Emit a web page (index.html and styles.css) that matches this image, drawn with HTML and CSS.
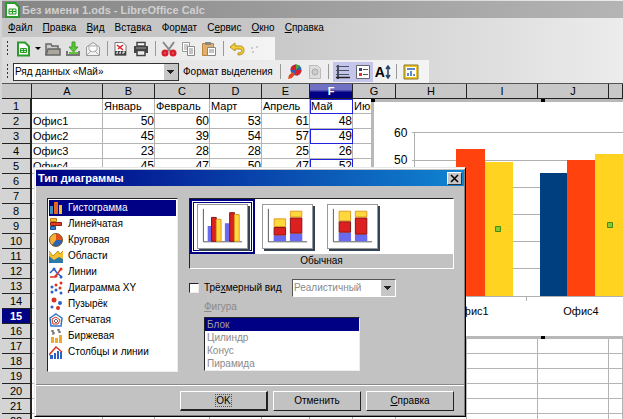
FILE: index.html
```
<!DOCTYPE html>
<html lang="ru">
<head>
    <meta charset="UTF-8">
    <meta name="viewport" content="width=device-width, initial-scale=1.0">
    <title>Без имени 1.ods - LibreOffice Calc</title>
    <link rel="stylesheet" href="styles.css">
</head>
<body>
    <header class="title-bar">
        <svg class="icon" viewBox="0 0 16 16"><path d="M2 1h9l4 4v10H2z" fill="#fff" stroke="#2a9a2a" stroke-width="2"/><path d="M5 7h7v5H5zM8.500 7v5M5 9.500h7" fill="#dff5df" stroke="#2a9a2a"/></svg>
        <h1>Без имени 1.ods - LibreOffice Calc</h1>
    </header>

    <nav class="menu">
        <a href="#"><u>Ф</u>айл</a>
        <a href="#"><u>П</u>равка</a>
        <a href="#"><u>В</u>ид</a>
        <a href="#">Вст<u>а</u>вка</a>
        <a href="#">Фор<u>м</u>ат</a>
        <a href="#">С<u>е</u>рвис</a>
        <a href="#"><u>О</u>кно</a>
        <a href="#"><u>С</u>правка</a>
    </nav>

    <div class="toolbar">
        <span class="handle"></span>
        <button class="tool" aria-label="Создать"><svg class="icon" viewBox="0 0 16 16"><path d="M3 1.500h7l4 4v9H3z" fill="#fff" stroke="#2a9a2a" stroke-width="2"/><path d="M5.500 7.500h6v4h-6zM8.500 7.500v4M5.500 9.500h6" fill="#c8efc8" stroke="#2a9a2a"/></svg></button>
        <button class="arrow" aria-label="Список"></button>
        <button class="tool" aria-label="Открыть"><svg class="icon" viewBox="0 0 16 16"><path d="M1 14V3h5l1 2h6v3" fill="#ccc" stroke="#666" stroke-width="1.500"/><path d="M1 14l2-6h12v6z" fill="#aaa89c" stroke="#666" stroke-width="1.500"/></svg></button>
        <button class="tool" aria-label="Сохранить"><svg class="icon" viewBox="0 0 16 16"><path d="M7 1h3v5h3l-4.500 5L4 6h3z" fill="#5ec43c" stroke="#38a01c"/><path d="M2 10v4h12v-4" fill="none" stroke="#777" stroke-width="2"/><path d="M4 12h9" stroke="#5ec43c" stroke-width="2"/></svg></button>
        <button class="tool" aria-label="Отправить"><svg class="icon" viewBox="0 0 16 16"><path d="M1.500 6L8 1.500 14.500 6v8.500h-13z" fill="#f2f2f2" stroke="#999"/><path d="M4 5h8v4l-4 2-4-2zM1.500 14.500L6 10M14.500 14.500L10 10" fill="#fff" stroke="#aaa"/></svg></button>
        <span class="sep"></span>
        <button class="tool" aria-label="Экспорт в PDF"><svg class="icon" viewBox="0 0 16 16"><path d="M2 1.500h8l3 3v10H2z" fill="#fff" stroke="#777"/><path d="M4 4l6 5M5 8l5-4" stroke="#d22" stroke-width="1.500"/><path d="M2 10h11v4H2z" fill="#444"/><path d="M4 13v-2h1M7 13v-2h1M10 13v-2h2" stroke="#fff" fill="none"/></svg></button>
        <button class="tool" aria-label="Печать"><svg class="icon" viewBox="0 0 16 16"><path d="M1 5h14v7H1z" fill="#444"/><path d="M4 1.500h8V5H4z" fill="#fff" stroke="#444" stroke-width="1.500"/><path d="M4 9.500h8v5H4z" fill="#eee" stroke="#444" stroke-width="1.500"/><path d="M3 7h10" stroke="#999"/></svg></button>
        <span class="sep"></span>
        <button class="tool" aria-label="Вырезать"><svg class="icon" viewBox="0 0 16 16"><path d="M2 1l8 10M13 1L6 11" stroke="#888" stroke-width="2"/><circle cx="4" cy="12" r="2" fill="#fff" stroke="#d8202c" stroke-width="3"/><circle cx="12" cy="12" r="2" fill="#fff" stroke="#d8202c" stroke-width="3"/></svg></button>
        <button class="tool" aria-label="Копировать"><svg class="icon" viewBox="0 0 16 16"><path d="M1.500 1.500h7v9h-7zM3 4h4M3 6h4M3 8h4" fill="#fff" stroke="#999"/><path d="M6.500 5.500h7v9h-7zM8 8h4M8 10h4M8 12h4" fill="#fff" stroke="#888"/></svg></button>
        <button class="tool" aria-label="Вставить"><svg class="icon" viewBox="0 0 16 16"><path d="M1.500 2.500h11v12h-11z" fill="#e2b06a" stroke="#b8863c"/><path d="M4 1h6v3H4z" fill="#888"/><path d="M6.500 6.500h8v8h-8zM8 9h5M8 11h5" fill="#fff" stroke="#888"/></svg></button>
        <span class="sep"></span>
        <button class="tool" aria-label="Отменить"><svg class="icon" viewBox="0 0 16 16"><path d="M6 2L1 6l5 4V8h5q2 0 2 2t-4 2v2q6 0 6-4.500T11 5H6z" fill="#f4cf3a" stroke="#b8901c"/></svg></button>
        <button class="tool" aria-label="Вернуть"><svg class="icon" viewBox="0 0 16 16"><path d="M2 7h2M7 6h2M3 11h2" stroke="#ccc" stroke-width="2"/></svg></button>
    </div>

    <div class="toolbar">
        <span class="handle"></span>
        <select class="element-select" aria-label="Элемент диаграммы">
            <option>Ряд данных «Май»</option>
        </select>
        <button class="text-tool">Формат выделения</button>
        <span class="sep"></span>
        <button class="tool" aria-label="Тип диаграммы"><svg class="icon" viewBox="0 0 16 16"><circle cx="9" cy="6" r="5.500" fill="#2b62b8"/><path d="M9 6V0.500A5.500 5.500 0 0 0 3.500 6z" fill="#d8202c"/><path d="M9 6h5.500A5.500 5.500 0 0 1 9 11.500z" fill="#d8202c"/><path d="M9 6V0.500A5.500 5.500 0 0 1 13 2z" fill="#4aa83c"/><path d="M1 15l1-4 4-3 2 2-3 4z" fill="#e04a20"/></svg></button>
        <button class="tool" aria-label="Таблица данных" disabled><svg class="icon" viewBox="0 0 16 16"><path d="M2.500 1.500h8l3 3v10h-11z" fill="#ddd" stroke="#bbb"/><circle cx="8" cy="8" r="3" fill="#ccc" stroke="#aaa"/></svg></button>
        <span class="sep"></span>
        <button class="tool pressed" aria-label="Сетка"><svg class="icon" viewBox="0 0 16 16"><path d="M3 1v14M1 13.500h14" stroke="#222" stroke-width="1.500"/><path d="M1 2.500h13M1 6.500h13M1 10.500h13" stroke="#456"/></svg></button>
        <button class="tool pressed" aria-label="Легенда"><svg class="icon" viewBox="0 0 16 16"><path d="M1.500 1.500h13v13h-13z" fill="#fff" stroke="#666"/><path d="M4 4h3v3H4z" fill="#348"/><path d="M4 9h3v3H4z" fill="#d33"/><path d="M8 5.500h5M8 10.500h5" stroke="#555"/></svg></button>
        <button class="tool scale" aria-label="Масштаб текста">A<svg class="scale-arrow" viewBox="0 0 6 14"><path d="M3 2v10M1 4l2-3 2 3M1 10l2 3 2-3" fill="none" stroke="#246" stroke-width="1.500"/></svg></button>
        <span class="sep"></span>
        <button class="tool" aria-label="Авторазметка"><svg class="icon" viewBox="0 0 16 16"><path d="M2 2h12v12H2z" fill="#fff" stroke="#f0c41c" stroke-width="2"/><path d="M1 1h14v14H1z" fill="none" stroke="#887830"/><path d="M4 5h8" stroke="#2b62b8" stroke-width="1.500"/><path d="M5 12V9M8 12V7M11 12v-2" stroke="#2b62b8" stroke-width="1.500"/></svg></button>
    </div>

    <main class="sheet">
        <table class="cells">
            <colgroup>
                <col class="w-num"><col class="w-wide"><col class="w-b"><col class="w-c"><col class="w-b"><col class="w-e"><col class="w-f"><col class="w-f"><col class="w-wide"><col class="w-wide"><col class="w-wide"><col>
            </colgroup>
            <thead>
                <tr><th></th><th>A</th><th>B</th><th>C</th><th>D</th><th>E</th><th class="current">F</th><th>G</th><th>H</th><th>I</th><th>J</th><th></th></tr>
            </thead>
            <tbody id="rows"></tbody>
        </table>

        <figure class="chart">
            <svg width="300" height="234">
                <g stroke="#b0b0b0">
                    <path d="M38 30.500H300M38 58.500H300M38 85.500H300M38 112.500H300M38 139.500H300M38 166.500H300M38 194.500H300"/>
                    <path d="M40.500 30v169M152.500 194v5"/>
                </g>
                <g fill="#003f7f"><path d="M54 66h28v128H54z"/><path d="M166 71h27v123H166z"/></g>
                <g fill="#ff420e"><path d="M82 47h29v147H82z"/><path d="M193 58h28v136H193z"/></g>
                <g fill="#ffd320"><path d="M111 60h28v134H111z"/><path d="M221 52h28v142H221z"/></g>
                <g fill="#8bc832" stroke="#3f8a10"><path d="M121.500 124.500h5v5h-5z"/><path d="M233.500 120.500h5v5h-5z"/></g>
                <g class="chart-values">
                    <text x="20" y="35">60</text>
                    <text x="20" y="62">50</text>
                </g>
                <g class="chart-names">
                    <text x="97" y="213">Офис1</text>
                    <text x="207" y="213">Офис4</text>
                </g>
            </svg>
            <i class="grip top-left"></i>
            <i class="grip top"></i>
            <i class="grip bottom"></i>
        </figure>
    </main>

    <section class="dialog" role="dialog" aria-labelledby="dialogTitle">
        <div class="dialog-title">
            <h2 id="dialogTitle">Тип диаграммы</h2>
            <button class="close" aria-label="Закрыть"><svg viewBox="0 0 9 9" width="9" height="9"><path d="M1 1l7 7M8 1L1 8" stroke="#000" stroke-width="1.500"/></svg></button>
        </div>

        <div class="dialog-body">
            <ul class="types">
                <li class="selected"><svg class="type-icon" viewBox="0 0 14 14"><path d="M1 5h3v8H1z" fill="#3a8fc8"/><path d="M5 1h4v12H5z" fill="#e8641c"/><path d="M10 4h3v9h-3z" fill="#f4c030"/></svg>Гистограмма</li>
                <li><svg class="type-icon" viewBox="0 0 14 14"><path d="M1.500 1.500h6v3h-6z" fill="#f4c030" stroke="#c08018"/><path d="M1.500 5.500h11v3h-11z" fill="#e04020" stroke="#902010"/><path d="M1.500 9.500h5v3h-5z" fill="#3a7fc8" stroke="#1c4c90"/></svg>Линейчатая</li>
                <li><svg class="type-icon" viewBox="0 0 14 14"><circle cx="7" cy="7" r="6.500" fill="#f4b030"/><path d="M7 7V.5A6.500 6.500 0 0 1 13.500 7z" fill="#e0501c"/><path d="M7 7h6.500A6.500 6.500 0 0 1 3 12z" fill="#2c62b0"/><circle cx="7" cy="7" r="6.500" fill="none" stroke="#7a5c30"/></svg>Круговая</li>
                <li><svg class="type-icon" viewBox="0 0 14 14"><path d="M0 2l4 5 5-5 2 3 3-3v12H0z" fill="#f4c030"/><path d="M0 2l4 5 5-5 2 3 3-3" fill="none" stroke="#c89010"/><path d="M0 7l5 4 5-3 4 2v4H0z" fill="#2c78a8"/></svg>Области</li>
                <li><svg class="type-icon" viewBox="0 0 14 14"><path d="M1 8l4-4 3 4 5 4" fill="none" stroke="#2c62c8" stroke-width="1.500"/><path d="M1 12h5l6-8" fill="none" stroke="#e03020" stroke-width="1.500"/><g fill="#2c62c8"><circle cx="5" cy="4" r="1.500"/><circle cx="12" cy="12" r="1.500"/></g><g fill="#e03020"><circle cx="12" cy="4" r="1.500"/><circle cx="7" cy="11" r="1.500"/></g></svg>Линии</li>
                <li><svg class="type-icon" viewBox="0 0 14 14"><g fill="#2c62c8"><circle cx="3" cy="6" r="1.500"/><circle cx="7" cy="9" r="1.500"/><circle cx="3" cy="11" r="1.500"/><circle cx="12" cy="12" r="1.500"/></g><g fill="#e03020"><circle cx="7" cy="4" r="1.500"/><circle cx="12" cy="2" r="1.500"/><circle cx="11" cy="7" r="1.500"/></g></svg>Диаграмма XY</li>
                <li><svg class="type-icon" viewBox="0 0 14 14"><circle cx="5" cy="3" r="2.500" fill="#e03020"/><circle cx="11" cy="6" r="2" fill="#2c62c8"/><circle cx="3" cy="10" r="1.500" fill="#2c62c8"/><circle cx="9" cy="11" r="2" fill="#e03020"/></svg>Пузырёк</li>
                <li><svg class="type-icon" viewBox="0 0 14 14"><path d="M7 1l6 4-1 8H2L1 5z" fill="none" stroke="#2c78c8" stroke-width="1.500"/><path d="M7 4l4 3-2 4H4L3 6z" fill="none" stroke="#e03020"/><path d="M7 6l2 2-2 2-2-2z" fill="none" stroke="#666"/></svg>Сетчатая</li>
                <li><svg class="type-icon" viewBox="0 0 14 14"><path d="M2 8h3v6H2zM6 9h3v5H6zM10 6h3v8h-3z" fill="#f4a828"/><path d="M4 1v5M2 2h2M4 4h2M10 0v4M8 1h2M10 3h2" stroke="#444" fill="none"/></svg>Биржевая</li>
                <li><svg class="type-icon" viewBox="0 0 14 14"><path d="M1 10h3v4H1zM5 8h2v6H5zM8 6h2v8H8zM11 7h2v7h-2z" fill="#2c62c8"/><path d="M0 10l7-8 6 5" fill="none" stroke="#e03020" stroke-width="1.500"/></svg>Столбцы и линии</li>
            </ul>

            <div class="options">
                <div class="variants">
                    <div class="thumbs">
                        <button class="thumb active" aria-label="Обычная"><svg viewBox="0 0 51 45" width="51" height="45"><path d="M5.500 4v34.500H46" fill="none" stroke="#555"/><path d="M10 22h4v16h-4zM28 19h5v19h-5z" fill="#6a6af0"/><path d="M14 13h5v25h-5zM33 8h5v30h-5z" fill="#dc2020" stroke="#801010"/><path d="M19 15h5v23h-5zM38 10h5v28h-5z" fill="#ffd83c" stroke="#e09a20"/></svg></button>
                        <button class="thumb" aria-label="С накоплением"><svg viewBox="0 0 51 45" width="51" height="45"><path d="M5.500 4v34.500H46" fill="none" stroke="#555"/><path d="M11 32h13v6H11zM28 30h13v8H28z" fill="#6a6af0"/><path d="M11.500 23.500h12v8h-12zM28.500 13.500h12v16h-12z" fill="#dc2020" stroke="#801010"/><path d="M11.500 14.500h12v8h-12zM28.500 6.500h12v6h-12z" fill="#ffd83c" stroke="#e09a20"/></svg></button>
                        <button class="thumb" aria-label="Процентная"><svg viewBox="0 0 51 45" width="51" height="45"><path d="M5.500 4v34.500H46" fill="none" stroke="#555"/><path d="M11 29h13v9H11zM28 31h13v7H28z" fill="#6a6af0"/><path d="M11.500 17.500h12v11h-12zM28.500 13.500h12v17h-12z" fill="#dc2020" stroke="#801010"/><path d="M11.500 6.500h12v10h-12zM28.500 6.500h12v6h-12z" fill="#ffd83c" stroke="#e09a20"/></svg></button>
                    </div>
                    <p class="variant-name">Обычная</p>
                </div>

                <div class="look">
                    <input type="checkbox" id="view3d">
                    <label for="view3d">Трё<u>х</u>мерный вид</label>
                    <select class="scheme" aria-label="Схема" disabled>
                        <option>Реалистичный</option>
                    </select>
                </div>

                <div class="shape">
                    <p id="shapeLabel"><u>Ф</u>игура</p>
                    <ul class="shapes" aria-labelledby="shapeLabel">
                        <li class="selected">Блок</li>
                        <li>Цилиндр</li>
                        <li>Конус</li>
                        <li>Пирамида</li>
                    </ul>
                </div>
            </div>
        </div>

        <div class="dialog-buttons">
            <button class="default"><span>OK</span></button>
            <button>Отменить</button>
            <button><u>С</u>правка</button>
        </div>
    </section>

    <script>
        const data = [
            ['', 'Январь', 'Февраль', 'Март', 'Апрель', 'Май', 'Июнь'],
            ['Офис1', 50, 60, 53, 61, 48],
            ['Офис2', 45, 39, 54, 57, 49],
            ['Офис3', 23, 28, 28, 25, 26],
            ['Офис4', 45, 47, 50, 47, 52]
        ];
        const seriesRows = [1, 3, 5];
        const tbody = document.getElementById('rows');

        for (let r = 1; r <= 22; r++) {
            const tr = document.createElement('tr');
            const th = document.createElement('th');
            th.textContent = r;
            if (r === 15) th.className = 'current';
            tr.appendChild(th);

            for (let c = 0; c < 11; c++) {
                const td = document.createElement('td');
                const value = (data[r - 1] || [])[c];
                if (value !== undefined) td.textContent = value;
                if (typeof value === 'number') td.classList.add('number');
                if (c === 5 && seriesRows.includes(r)) td.classList.add('marked');
                tr.appendChild(td);
            }
            tbody.appendChild(tr);
        }
    </script>
</body>
</html>
```
FILE: styles.css
```
* {
    margin: 0;
    padding: 0;
    box-sizing: border-box;
}

body {
    height: 100vh;
    overflow: hidden;
    display: flex;
    flex-direction: column;
    position: relative;
    padding-top: 1px;
    border-left: 2px solid #d4d4d4;
    background: linear-gradient(90deg, #c6c6c6 40%, #ececec);
    font: 10px/14px "Liberation Sans", Arial, sans-serif;
    color: #000;
}

button, select, input {
    font: inherit;
    color: inherit;
    border-radius: 0;
}

button {
    border: none;
    background: none;
}

ul {
    list-style: none;
}

.icon {
    width: 16px;
    height: 16px;
    flex: none;
}

.title-bar {
    display: flex;
    align-items: center;
    gap: 2px;
    height: 17px;
    padding-left: 2px;
    background: linear-gradient(90deg, #858585, #999 40%, #b4b4b4);
}

.title-bar h1 {
    font-size: 11px;
    color: #d0d0d0;
}

.menu {
    display: flex;
    align-items: center;
    gap: 10px;
    height: 19px;
    padding-left: 6px;
}

.menu a {
    color: inherit;
    text-decoration: none;
}

.toolbar {
    display: flex;
    align-items: center;
    align-self: flex-start;
    height: 23px;
    padding-right: 8px;
    background: linear-gradient(90deg, #dcdcdc, #f4f4f4);
}

.handle {
    width: 11px;
    height: 17px;
    background: radial-gradient(#333 1px, transparent 1px) 4px 0 / 3px 4px repeat-y;
}

.tool {
    display: flex;
    align-items: center;
    justify-content: center;
    width: 20px;
    height: 20px;
}

.tool.pressed {
    background: #c4c4ec;
}

.arrow {
    display: flex;
    align-items: center;
    justify-content: center;
    width: 10px;
    height: 20px;
}

.arrow::after {
    content: "";
    border: 3px solid transparent;
    border-top-color: #000;
    border-bottom: none;
}

.sep {
    width: 8px;
    height: 15px;
    background: linear-gradient(#999, #999) center / 1px 100% no-repeat;
}

.scale {
    font-size: 14px;
    font-weight: bold;
}

.scale-arrow {
    width: 6px;
    height: 14px;
}

.text-tool {
    padding: 0 4px;
}

select {
    appearance: none;
    height: 18px;
    padding-left: 1px;
    border: 1px solid;
    border-color: #555 #fff #fff #555;
    background:
        linear-gradient(#222, #222) right 4px top 6px / 7px 1px no-repeat,
        linear-gradient(#222, #222) right 5px top 7px / 5px 1px no-repeat,
        linear-gradient(#222, #222) right 6px top 8px / 3px 1px no-repeat,
        linear-gradient(#222, #222) right 7px top 9px / 1px 1px no-repeat,
        linear-gradient(#c6c6c6, #c6c6c6) right / 14px 100% no-repeat,
        #fff;
}

.element-select {
    width: 166px;
    border: 1px solid #333;
}

.sheet {
    flex: 1;
    min-height: 0;
    position: relative;
    overflow: hidden;
    background: #fff;
    border-top: 1px solid #555;
}

.cells {
    width: 100%;
    table-layout: fixed;
    border-collapse: separate;
    border-spacing: 0;
    font-size: 11px;
    line-height: 14px;
}

.w-num { width: 30px; }
.w-wide { width: 71px; }
.w-b { width: 52px; }
.w-c { width: 55px; }
.w-e { width: 48px; }
.w-f { width: 43px; }

.cells tr {
    height: 15px;
}

.cells th {
    height: 15px;
    background: #c8c8c8;
    border-right: 1px solid #222;
    border-bottom: 1px solid #222;
    font-weight: normal;
}

.cells tbody th {
    background: #d4d4d4;
    border-right-width: 2px;
}

.cells th.current {
    background: #000084;
    color: #fff;
    font-weight: bold;
}

.cells thead th.current {
    background: linear-gradient(#7070c4 40%, #000084 60%);
}

.cells td {
    overflow: hidden;
    white-space: nowrap;
    padding-left: 1px;
    border-right: 1px solid #b4b4b4;
    border-bottom: 1px solid #b4b4b4;
}

.cells td.number {
    font-size: 12px;
    text-align: right;
}

.cells td.marked {
    outline: 1px solid #2020e0;
    outline-offset: -1px;
}

/* chart object floating over the cells */
.chart {
    position: absolute;
    left: 369px;
    top: 15px;
    right: 0;
    height: 240px;
    overflow: hidden;
    border: 3px solid #b8b8b8;
    border-right: none;
    background: #fff;
    overflow: visible;
}

.chart svg {
    display: block;
}

.chart-values {
    font-size: 12px;
}

.chart-names {
    font-size: 11px;
    text-anchor: middle;
}

.grip {
    position: absolute;
    width: 4px;
    height: 3px;
    background: #000;
}

.grip.top-left {
    left: -3px;
    top: -3px;
}

.grip.top {
    left: 167px;
    top: -3px;
}

.grip.bottom {
    left: 167px;
    bottom: -3px;
}

.dialog {
    position: absolute;
    left: 32px;
    top: 167px;
    width: 432px;
    padding: 2px 1px 5px;
    background: #c2c2c2;
    border: 1px solid;
    border-color: #e8e8e8 #000 #000 #e8e8e8;
    box-shadow: inset 1px 1px #fff, inset -1px -1px #808080;
}

.dialog-title {
    display: flex;
    align-items: center;
    justify-content: space-between;
    height: 16px;
    padding: 0 2px;
    background: linear-gradient(90deg, #000084, #1084d0);
    color: #fff;
}

.dialog-title h2 {
    font-size: 11px;
}

.close {
    display: flex;
    align-items: center;
    justify-content: center;
    width: 15px;
    height: 13px;
    background: #c6c6c6;
    border: 1px solid;
    border-color: #fff #333 #333 #fff;
}

.dialog-body {
    display: flex;
    gap: 11px;
    padding: 12px 10px 12px 11px;
    border-bottom: 1px solid #888;
}

.types {
    width: 131px;
    height: 174px;
    padding: 1px;
    background: #fff;
    border: 1px solid;
    border-color: #222 #eee #eee #222;
}

.types li {
    display: flex;
    align-items: center;
    gap: 5px;
    height: 16px;
}

.type-icon {
    width: 14px;
    height: 14px;
}

.selected {
    background: #000084;
    color: #fff;
}

.options {
    flex: 1;
}

.variants {
    border: 1px solid;
    border-color: #222 #fff #fff #222;
}

.thumbs {
    display: flex;
    height: 55px;
    background: #fff;
}

.thumb {
    display: flex;
    align-items: center;
    justify-content: center;
    width: 65px;
    height: 55px;
}

.thumb svg {
    background: #fff;
    border: 1px solid #999;
    box-shadow: 2px 2px #345;
}

.thumb.active {
    border: 2px solid #000084;
    box-shadow: inset 0 0 0 1px #fff, inset 0 0 0 2px #000084;
}

.variant-name {
    text-align: center;
}

.look {
    display: flex;
    align-items: center;
    margin-top: 10px;
}

.look input {
    appearance: none;
    width: 10px;
    height: 10px;
    margin-right: 5px;
    background: #fff;
    border: 1px solid;
    border-color: #222 #eee #eee #222;
}

.look label {
    flex: 0 0 88px;
    white-space: nowrap;
}

.scheme {
    width: 104px;
    color: #8a8a8a;
    opacity: 1;
}

.shape {
    width: 156px;
    margin: 3px 0 0 15px;
    color: #8a8a8a;
}

.shapes {
    margin-top: 3px;
    background: #fff;
    border: 1px solid;
    border-color: #222 #eee #eee #222;
    line-height: 13px;
}

.shapes li {
    padding-left: 2px;
}

.shapes .selected {
    color: #a0a0a0;
}

.dialog-buttons {
    display: flex;
    justify-content: flex-end;
    gap: 5px;
    padding: 5px 10px 0 0;
    border-top: 1px solid #fff;
}

.dialog-buttons button {
    width: 88px;
    height: 20px;
    border: 1px solid;
    border-color: #fff #222 #222 #fff;
}

.dialog-buttons .default {
    border-width: 1px 2px 2px 1px;
}

.default span {
    outline: 1px dotted #555;
}
```
